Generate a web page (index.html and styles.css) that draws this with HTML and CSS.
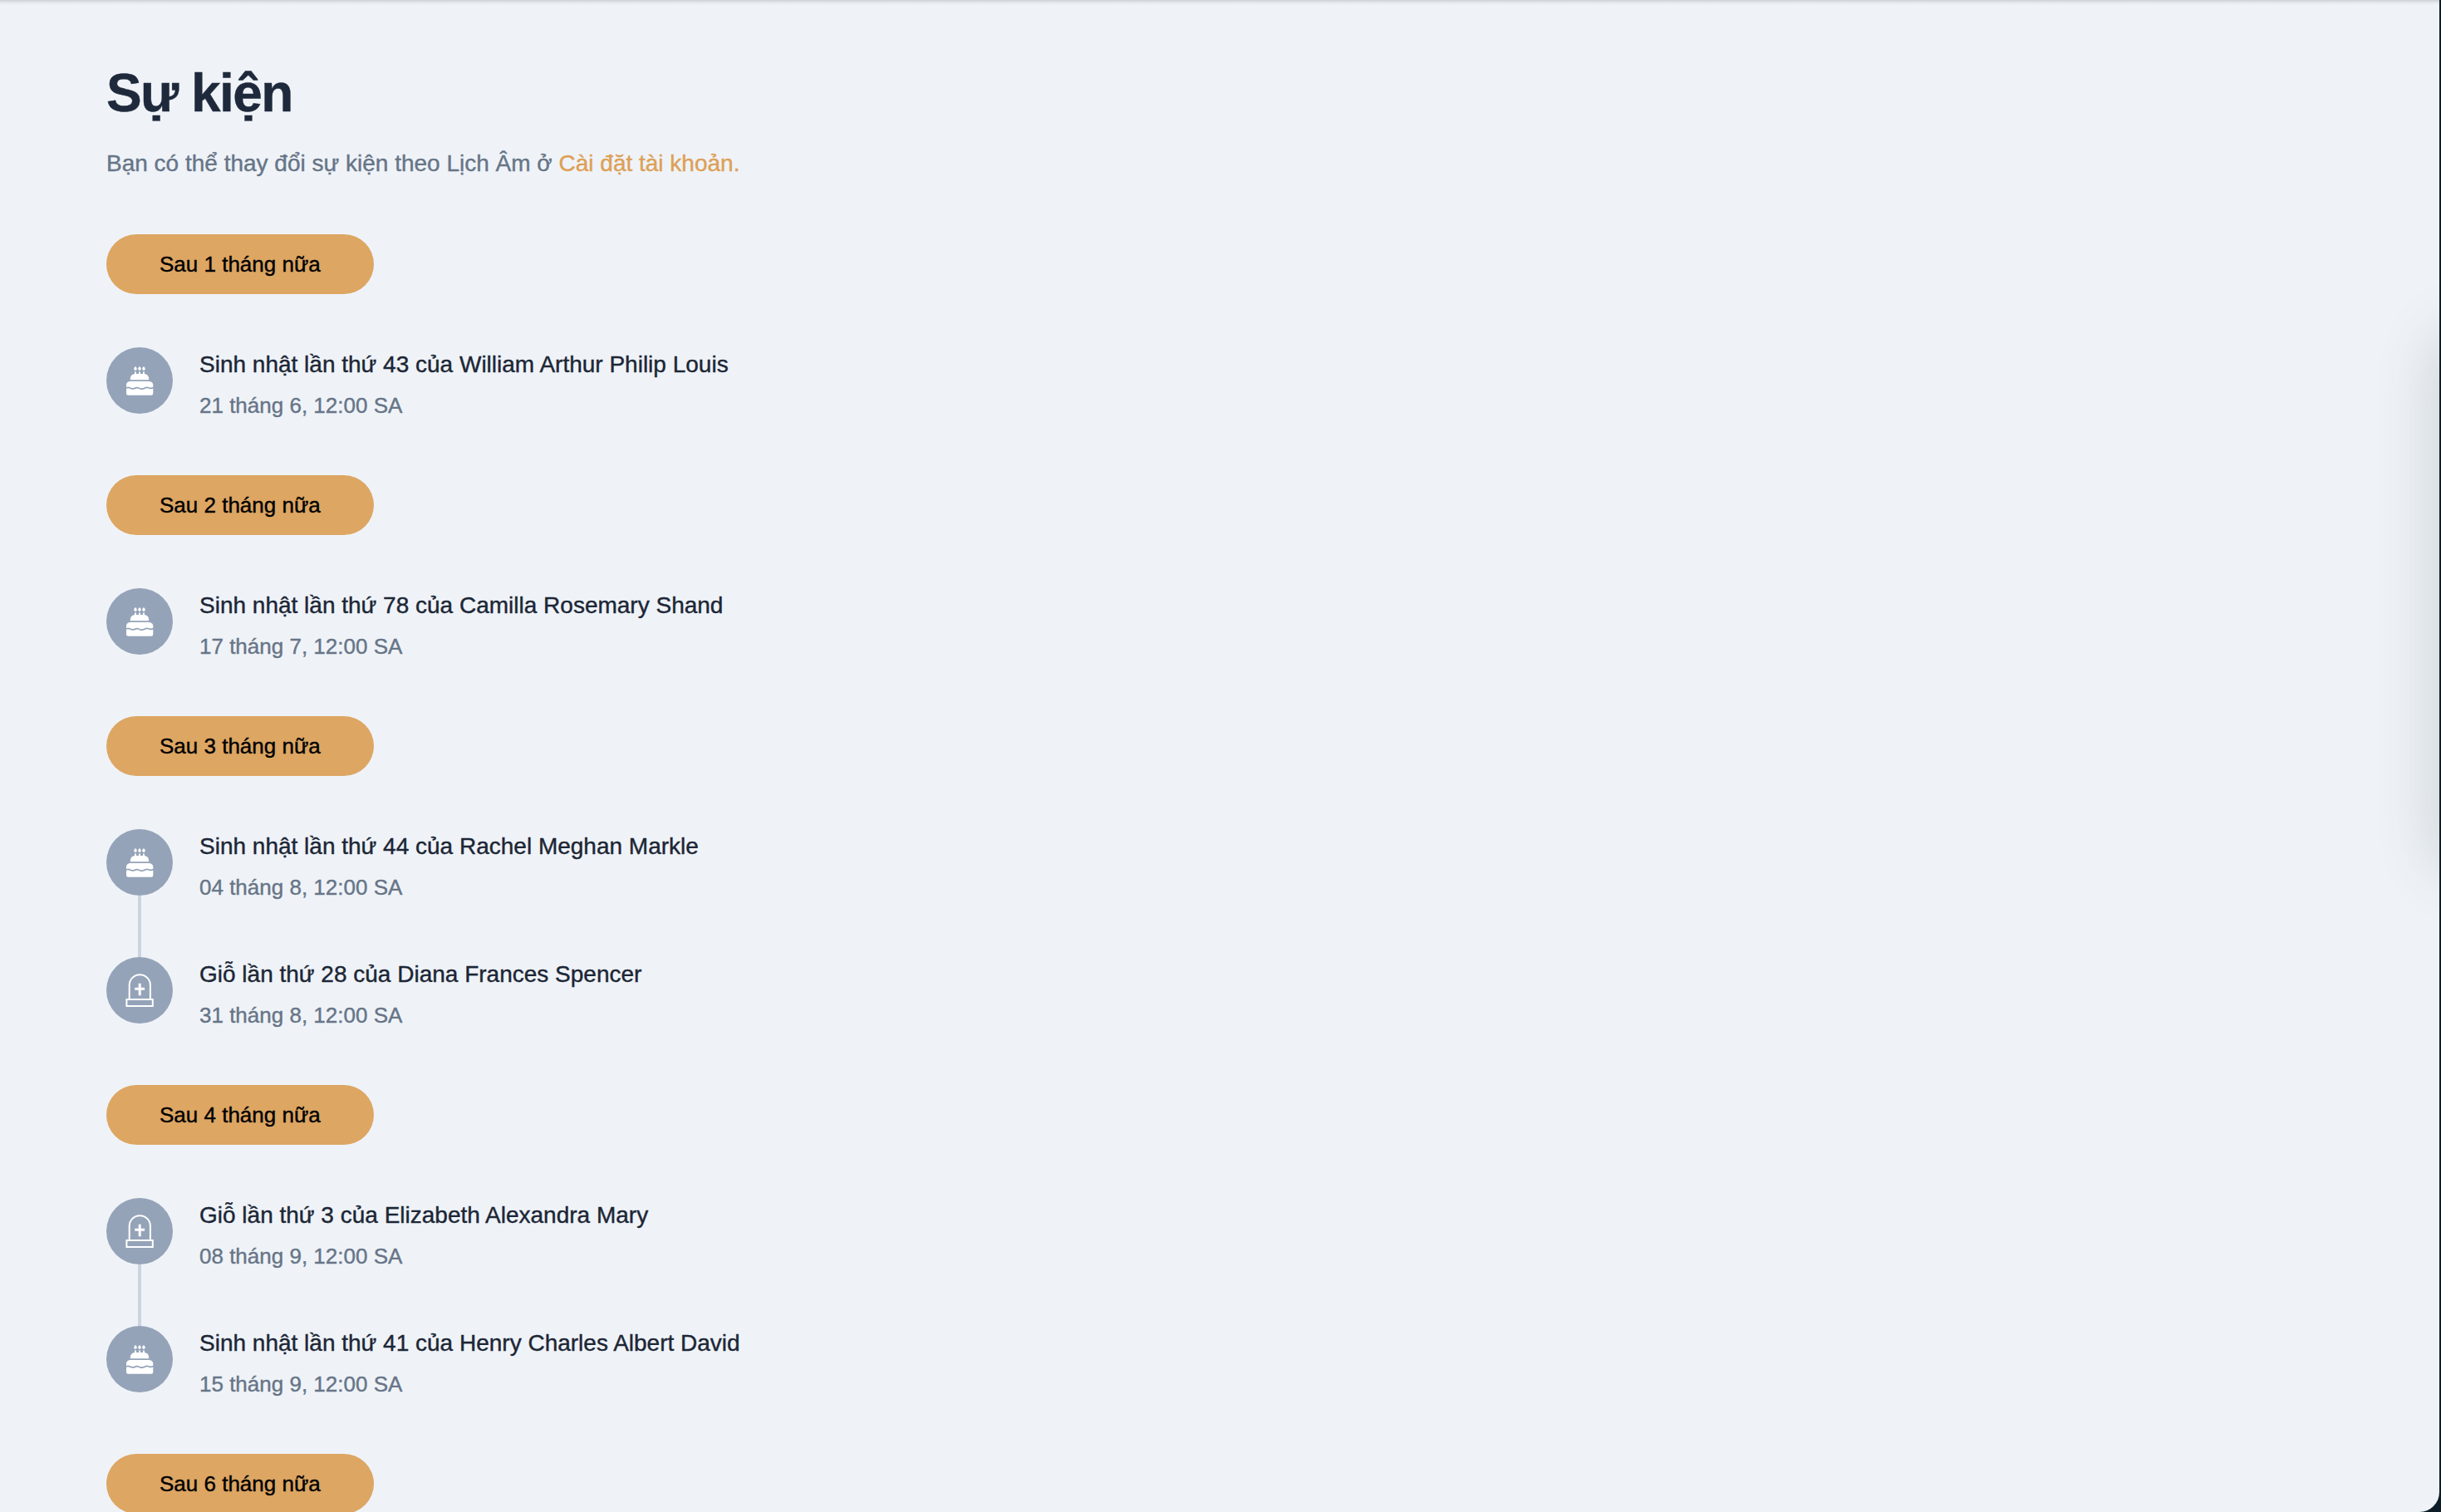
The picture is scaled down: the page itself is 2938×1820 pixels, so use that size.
FILE: index.html
```html
<!DOCTYPE html>
<html lang="vi">
<head>
<meta charset="utf-8">
<title>Sự kiện</title>
<link rel="stylesheet" href="styles.css">
</head>
<body>
<svg class="sprite" aria-hidden="true">
  <symbol id="cake" viewBox="0 0 40 40">
    <g fill="currentColor">
      <path d="M15 3.100q1.800 1.400 1.800 3t-1.800 1.800q-1.800-.2-1.800-1.800t1.800-3zM20 3.100q1.800 1.400 1.800 3t-1.800 1.800q-1.800-.2-1.800-1.800t1.800-3zM25 3.100q1.800 1.400 1.800 3t-1.800 1.800q-1.800-.2-1.800-1.800t1.800-3z"/>
      <path d="M14 9.400h2v2.600h3V9.400h2v2.600h3V9.400h2v2.700q5.300.6 5.300 7.100H8.700q0-6.500 5.300-7.100z"/>
      <path d="M8.500 21h23q4.800 .6 4.800 4.500v2.300q-2.300 1.300-4.600.4-3-1.500-6 .3-2.700 1.400-5.700.2-3-1.600-6-.2-3 1.200-5.500-.3-2.200-1.200-4.500-.2v-2.500q0-3.900 4.500-4.500z"/>
      <path d="M4 29.700q2.300-1 4.500.3 3 1.500 6 .2 3-1.400 5.500.2 3 1.300 6-.2 3-1.700 5.700-.3 2.300.9 4.600-.3v5.800q0 2.300-2.300 2.300H6.300Q4 37.700 4 35.400z"/>
    </g>
  </symbol>
  <symbol id="grave" viewBox="0 0 40 40">
    <g fill="none" stroke="currentColor" stroke-width="2">
      <path d="M7.700 31V13.800a12.600 12.600 0 0 1 25.200 0V31"/>
      <path d="M4.400 31h31.400v8H4.400z"/>
      <path d="M20.200 11.800v14.400M14.300 18.300h11.800" stroke-width="3"/>
    </g>
  </symbol>
</svg>
<div class="page">
  <main class="events">
    <h1 class="heading">Sự kiện</h1>
    <p class="intro">Bạn có thể thay đổi sự kiện theo Lịch Âm ở <a class="intro-link">Cài đặt tài khoản.</a></p>

    <h2 class="month">Sau 1 tháng nữa</h2>
    <ul class="list">
      <li class="event">
        <span class="badge"><svg class="icon"><use href="#cake"/></svg></span>
        <div class="info"><div class="name">Sinh nhật lần thứ 43 của William Arthur Philip Louis</div><div class="date">21 tháng 6, 12:00 SA</div></div>
      </li>
    </ul>

    <h2 class="month">Sau 2 tháng nữa</h2>
    <ul class="list">
      <li class="event">
        <span class="badge"><svg class="icon"><use href="#cake"/></svg></span>
        <div class="info"><div class="name">Sinh nhật lần thứ 78 của Camilla Rosemary Shand</div><div class="date">17 tháng 7, 12:00 SA</div></div>
      </li>
    </ul>

    <h2 class="month">Sau 3 tháng nữa</h2>
    <ul class="list">
      <li class="event">
        <span class="badge"><svg class="icon"><use href="#cake"/></svg></span>
        <div class="info"><div class="name">Sinh nhật lần thứ 44 của Rachel Meghan Markle</div><div class="date">04 tháng 8, 12:00 SA</div></div>
      </li>
      <li class="event">
        <span class="badge"><svg class="icon"><use href="#grave"/></svg></span>
        <div class="info"><div class="name">Giỗ lần thứ 28 của Diana Frances Spencer</div><div class="date">31 tháng 8, 12:00 SA</div></div>
      </li>
    </ul>

    <h2 class="month">Sau 4 tháng nữa</h2>
    <ul class="list">
      <li class="event">
        <span class="badge"><svg class="icon"><use href="#grave"/></svg></span>
        <div class="info"><div class="name">Giỗ lần thứ 3 của Elizabeth Alexandra Mary</div><div class="date">08 tháng 9, 12:00 SA</div></div>
      </li>
      <li class="event">
        <span class="badge"><svg class="icon"><use href="#cake"/></svg></span>
        <div class="info"><div class="name">Sinh nhật lần thứ 41 của Henry Charles Albert David</div><div class="date">15 tháng 9, 12:00 SA</div></div>
      </li>
    </ul>

    <h2 class="month">Sau 6 tháng nữa</h2>
  </main>
  <div class="drawer"></div>
</div>
</body>
</html>
```
FILE: styles.css
```css
* {
  box-sizing: border-box;
  margin: 0;
  padding: 0;
}

body {
  height: 1820px;
  overflow: hidden;
  background: #0c1d27;
  font-family: "Liberation Sans", Arial, sans-serif;
  -webkit-text-stroke: 0.4px currentColor;
}

.sprite {
  display: none;
}

.page {
  position: relative;
  width: 2936px;
  height: 1820px;
  overflow: hidden;
  background: linear-gradient(#cdd0d4, #e4e8ec 3px, #eff3f8 6px);
  border-bottom-right-radius: 24px;
}

.events {
  display: flex;
  flex-direction: column;
  align-items: flex-start;
  padding: 72px 128px 0;
}

.heading {
  font-size: 64px;
  font-weight: 700;
  line-height: 80px;
  letter-spacing: -1.6px;
  color: #1e293b;
}

.intro {
  margin: 23px 0 63px;
  font-size: 28px;
  line-height: 44px;
  color: #677587;
}

.intro-link {
  color: #dda056;
}

.month {
  flex: none;
  padding: 0 64px;
  border-radius: 36px;
  background: #dda663;
  font-size: 26px;
  font-weight: 400;
  line-height: 72px;
  color: #000;
}

.list {
  padding-top: 64px;
  list-style: none;
}

.event {
  position: relative;
  display: flex;
  gap: 32px;
  height: 154px;
}

/* Connector from one badge down to the next */
.event:not(:last-child)::before {
  content: "";
  position: absolute;
  top: 80px;
  left: 38px;
  width: 4px;
  height: 74px;
  background: #cbd5e1;
}

.badge {
  display: flex;
  flex: none;
  align-items: center;
  justify-content: center;
  width: 80px;
  height: 80px;
  border-radius: 50%;
  background: #94a3b8;
  color: #fff;
}

.icon {
  width: 40px;
  height: 40px;
}

.name {
  padding-top: 1px;
  font-size: 28px;
  line-height: 40px;
  color: #1c2635;
}

.date {
  margin-top: 7px;
  font-size: 26px;
  line-height: 44px;
  color: #677587;
}

/* Closed side panel: only its shadow reaches the page */
.drawer {
  position: absolute;
  top: 410px;
  left: 2940px;
  width: 200px;
  height: 630px;
  border-radius: 24px;
  box-shadow: 0 0 72px 8px rgba(60, 75, 65, 0.2);
}
```
